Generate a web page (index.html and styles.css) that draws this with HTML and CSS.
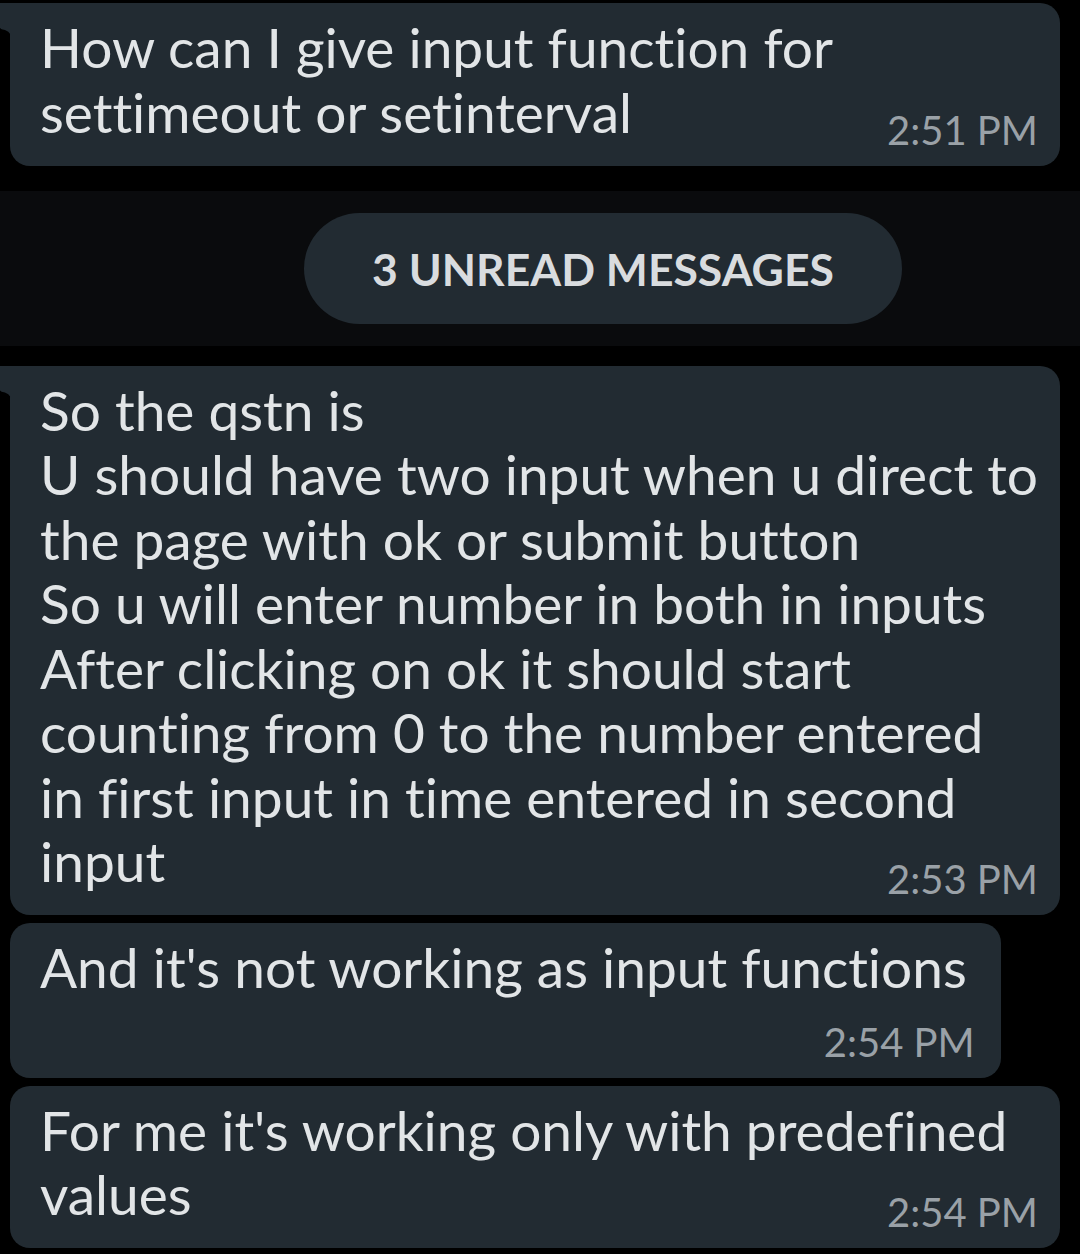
FILE: index.html
```html
<!DOCTYPE html>
<html>
  <head>
    <meta charset="utf-8" />
    <title>Chat</title>
    <link rel="stylesheet" href="styles.css">
  </head>
  <body>
    <div class="chat">
      <div class="msg first">
        <div class="text">How can I give input function for
<span>settimeout or setinterval</span><span class="time">2:51 PM</span></div>
      </div>

      <div class="unread">
        <span class="unreadPill">3 UNREAD MESSAGES</span>
      </div>

      <div class="msg first">
        <div class="text">So the qstn is
U should have two input when u direct to
the page with ok or submit button
So u will enter number in both in inputs
After clicking on ok it should start
counting from 0 to the number entered
in first input in time entered in second
<span>input</span><span class="time">2:53 PM</span></div>
      </div>
      <div class="msg short">
        <div class="text">And it's not working as input functions</div>
        <div class="time own">2:54 PM</div>
      </div>
      <div class="msg">
        <div class="text">For me it's working only with predefined
<span>values</span><span class="time">2:54 PM</span></div>
      </div>
    </div>
  </body>
</html>
```

FILE: styles.css
```css
html {
  background-color: #000;
  color: #e2e5e7;
  font-family: "Lato", "Open Sans", sans-serif;
  font-variant-ligatures: none;
}
body {
  margin: 0;
}

.chat {
  display: flex;
  flex-direction: column;
  align-items: flex-start;
  padding: 3px 20px 0 10px;
}

.msg {
  position: relative;
  box-sizing: border-box;
  width: 1050px;
  background-color: #222b32;
  border-radius: 20px;
  padding: 12px 30px 16px 30px;
  margin-bottom: 8px;
}

.msg.short {
  width: fit-content;
  padding-right: 34px;
}

.msg.first {
  border-top-left-radius: 0;
}

/* little tail on the first bubble of a group */
.msg.first:before {
  content: '';
  position: absolute;
  left: -10px;
  top: 0;
  width: 11px;
  height: 32px;
  background-color: #222b32;
  clip-path: polygon(0 0, 100% 0, 100% 100%, 75% 90%, 45% 84%, 15% 82%, 0 78%);
}

.text {
  display: flow-root;
  font-size: 55px;
  line-height: 64.5px;
  white-space: pre;
}

.time {
  font-size: 40px;
  line-height: 40px;
  color: #9aa1a7;
  white-space: nowrap;
}

.text .time {
  float: right;
  margin: 30px -8px 0 20px;
}

.time.own {
  display: block;
  text-align: right;
  margin: 22px -8px 0 0;
}

.unread {
  align-self: stretch;
  margin: 17px -20px 20px -10px;
  padding: 22px 0 22px 304px;
  background-color: #0a0b0d;
  display: flex;
}

.unreadPill {
  display: inline-block;
  width: 598px;
  height: 111px;
  line-height: 111px;
  border-radius: 56px;
  background-color: #222b32;
  color: #d9dcdf;
  font-weight: bold;
  font-size: 44.5px;
  text-align: center;
}
```
